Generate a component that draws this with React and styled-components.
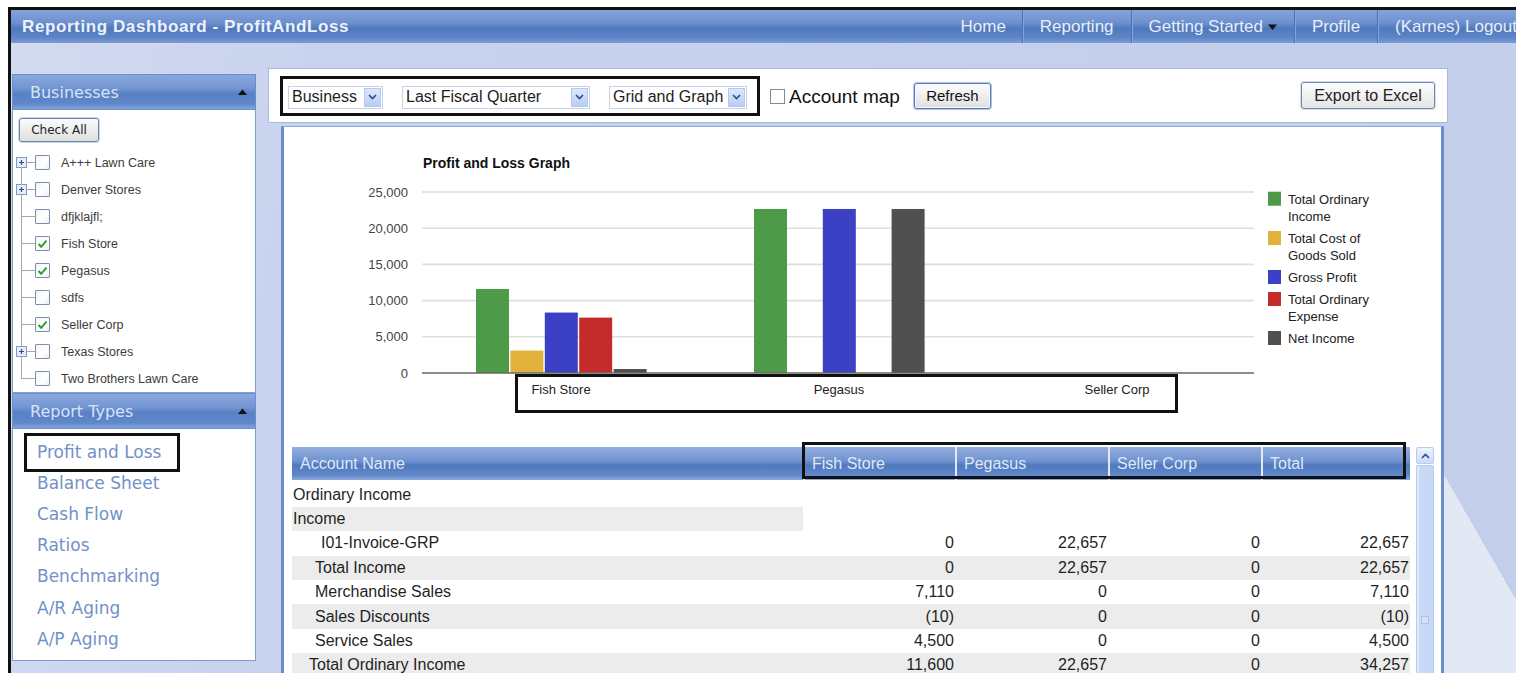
import React from 'react';
import styled, { createGlobalStyle, css } from 'styled-components';

const GlobalStyle = createGlobalStyle`
  html, body { margin: 0; padding: 0; background: #fff; }
  body { font-family: "Liberation Sans", Arial, sans-serif; overflow: hidden; }
  * { box-sizing: border-box; }
`;

const SANS = '"Liberation Sans", Arial, sans-serif';
const VERDANA = '"DejaVu Sans", Verdana, sans-serif';

/* ---------- shell ---------- */

const Viewport = styled.div`
  width: 1516px;
  height: 673px;
  padding: 7px 0 0 8px;
  overflow: hidden;
  background: #fff;
`;

const Frame = styled.div`
  width: 1508px;
  height: 666px;
  border-top: 3px solid #111;
  border-left: 3px solid #111;
  overflow: hidden;
  display: flex;
  flex-direction: column;
  background:
    linear-gradient(to top right, #e3e8f5 50%, transparent 50%) 1433px 465px / 72px 125px no-repeat,
    linear-gradient(#e3e8f5, #e3e8f5) 1433px 589px / 72px 100px no-repeat,
    linear-gradient(100deg, #d3dbf0 0%, #c8d2ed 22%, #c3ceeb 100%);
`;

const TopBar = styled.header`
  height: 33px;
  flex: none;
  display: flex;
  align-items: stretch;
  padding-left: 11px;
  background: linear-gradient(180deg, #84a3d9 0%, #6e91cf 38%, #5079bd 56%, #5b83c6 82%, #7b9cd6 100%);
`;

const AppTitle = styled.h1`
  margin: 0;
  align-self: center;
  font: bold 17px ${SANS};
  letter-spacing: 0.6px;
  color: #edf2fa;
`;

const Nav = styled.nav`
  margin-left: auto;
  margin-right: -18px;
  display: flex;
`;

const NavItem = styled.a`
  display: flex;
  align-items: center;
  gap: 5px;
  padding: 0 ${p => (p.$first ? 16 : 17)}px;
  font: 17px ${SANS};
  color: #e8eef9;
  text-decoration: none;
  white-space: nowrap;
  ${p => !p.$first && css`
    border-left: 1px solid #4a70b3;
    box-shadow: inset 1px 0 #86a5db;
  `}
`;

const Body = styled.div`
  flex: 1;
  min-height: 0;
  display: flex;
  padding: 25px 0 0 1px;
`;

/* ---------- sidebar ---------- */

const Sidebar = styled.aside`
  width: 244px;
  margin-top: 6px;
  display: flex;
  flex-direction: column;
  flex: none;
`;

const PanelHeader = styled.div`
  height: 36px;
  display: flex;
  align-items: center;
  justify-content: space-between;
  padding: 0 8px 0 17px;
  border: 1px solid #6a8fcf;
  background: linear-gradient(180deg, #8aa8dc 0%, #7194d1 40%, #5880c4 55%, #5f87c9 85%, #84a3d9 100%);
  font: 16px ${VERDANA};
  color: #d8e3f6;
`;

const PanelBody = styled.div`
  background: #fff;
  border: 1px solid #7e9fd6;
  border-top: none;
`;

const CheckAllButton = styled.button`
  display: block;
  margin: 8px 0 0 6px;
  width: 80px;
  height: 24px;
  padding: 0;
  border: 1px solid #72849f;
  border-radius: 3px;
  background: linear-gradient(#fbfbfb, #dfdfdf);
  box-shadow: 0 0 0 1px #c8d6ee;
  font: 12px ${VERDANA};
  color: #222;
`;

const Tree = styled.ul`
  list-style: none;
  margin: 7px 0 0;
  padding: 0;
`;

const TreeRow = styled.li`
  height: 27px;
  display: flex;
  align-items: center;
`;

const Connector = styled.span`
  width: 22px;
  height: 100%;
  flex: none;
  display: flex;
  align-items: center;
  background-repeat: no-repeat;
  background-image:
    linear-gradient(#a8a8a8, #a8a8a8),
    linear-gradient(#a8a8a8, #a8a8a8);
  background-size: 1px ${p => (p.$first || p.$last ? '14px' : '27px')}, 14px 1px;
  background-position: 8px ${p => (p.$first ? '13px' : '0')}, 8px 13px;
`;

const ExpandIcon = styled.svg`
  margin-left: 3px;
  display: block;
`;

const Box = styled.span`
  width: 15px;
  height: 15px;
  flex: none;
  display: flex;
  align-items: center;
  justify-content: center;
  border: 1px solid #7d8ea9;
  border-radius: 1px;
  background: linear-gradient(135deg, #f4f5f7, #ffffff 60%, #e9ecf1);
`;

const TreeLabel = styled.span`
  margin-left: 11px;
  font: 12.5px ${SANS};
  color: #3c3c3c;
  white-space: nowrap;
`;

const ReportList = styled.ul`
  list-style: none;
  margin: 0;
  padding: 7.5px 0 5.8px;
`;

const ReportItem = styled.li`
  height: 31.1px;
  display: flex;
  align-items: center;
`;

const ReportLink = styled.a`
  padding-left: 24px;
  font: 17px ${VERDANA};
  color: #7291c7;
  text-decoration: none;
  white-space: nowrap;
  ${p => p.$boxed && css`
    height: 39px;
    display: flex;
    align-items: center;
    flex: none;
    margin-left: 11px;
    padding: 0 16px 0 10px;
    border: 3px solid #111;
  `}
`;

/* ---------- main ---------- */

const Main = styled.main`
  width: 1180px;
  margin-left: 12px;
  display: flex;
  flex-direction: column;
`;

const Toolbar = styled.div`
  height: 55px;
  flex: none;
  display: flex;
  align-items: center;
  padding: 0 12px 0 11px;
  border: 1px solid #a3b9e2;
  background: #fff;
`;

const FilterGroup = styled.div`
  height: 40px;
  display: flex;
  align-items: center;
  gap: 19px;
  padding: 3px 10px 0 5px;
  border: 3px solid #111;
`;

const Select = styled.div`
  width: ${p => p.$w}px;
  height: 23px;
  display: flex;
  align-items: center;
  justify-content: space-between;
  padding: 0 1px 0 3px;
  border: 1px solid #c6d2ea;
  background: #fff;
  font: 16px ${SANS};
  color: #1d1d1d;
  white-space: nowrap;
`;

const SelectArrow = styled.span`
  width: 17px;
  height: 19px;
  display: flex;
  align-items: center;
  justify-content: center;
  border: 1px solid #b5c7ec;
  background: linear-gradient(#dde7fb, #b9cdf3);
`;

const MapToggle = styled.label`
  display: flex;
  align-items: center;
  gap: 4px;
  margin: 2px 0 0 10px;
  font: 19px ${SANS};
  color: #111;
`;

const PlainBox = styled.span`
  width: 15px;
  height: 15px;
  border: 1px solid #8a8a8a;
  background: #fff;
`;

const RefreshButton = styled.button`
  margin-left: 14px;
  width: 77px;
  height: 26px;
  padding: 0;
  border: 1px solid #5a7cb6;
  border-radius: 3px;
  background: linear-gradient(#fcfcfc, #e0e0e0);
  box-shadow: 0 0 0 1px #a9c3ee, inset 0 0 0 1px #f8f8f8;
  font: 15px ${SANS};
  color: #111;
`;

const ExportButton = styled.button`
  margin-left: auto;
  width: 134px;
  height: 27px;
  padding: 0;
  border: 1px solid #6f86ad;
  border-radius: 3px;
  background: linear-gradient(#fdfdfd, #e4e4e4);
  box-shadow: 0 0 0 1px #d3deef;
  font: 16px ${SANS};
  color: #222;
`;

const Content = styled.section`
  flex: 1;
  width: 1163px;
  margin: 3px 0 0 13px;
  border-left: 3px solid #6a8dcc;
  border-right: 3px solid #6a8dcc;
  border-top: 1px solid #8eaadf;
  background: #fff;
`;

const ChartSvg = styled.svg`
  display: block;
`;

const TableArea = styled.div`
  margin-top: 15px;
  padding-left: 8px;
  display: flex;
  gap: 6px;
  align-items: stretch;
`;

const Grid = styled.div`
  width: 1118px;
`;

const COLS = '511px 152px 153px 153px 149px';

const HeadRow = styled.div`
  position: relative;
  height: 33px;
  display: grid;
  grid-template-columns: ${COLS};
  background: linear-gradient(180deg, #93aedf 0%, #7093d0 42%, #5079be 55%, #6087c9 85%, #8aa8dc 100%);
`;

const HeadCell = styled.div`
  display: flex;
  align-items: center;
  padding-left: ${p => (p.$sep ? 7 : 8)}px;
  font: 16px ${SANS};
  color: #dfe8f7;
  ${p => p.$sep && css`border-left: 2px solid #e1e9f7;`}
`;

const HeadMark = styled.div`
  position: absolute;
  left: 510px;
  top: -5px;
  width: 604px;
  height: 37px;
  border: 3px solid #111;
  pointer-events: none;
`;

const Rows = styled.div`
  margin-top: 2.5px;
`;

const Row = styled.div`
  height: 24.4px;
  display: grid;
  grid-template-columns: ${COLS};
  font: 16px ${SANS};
  color: #1f1f1f;
  background: ${p => (p.$shade ? '#ececec' : 'transparent')};
`;

const NameCell = styled.div`
  display: flex;
  align-items: center;
  padding-left: ${p => p.$indent + 1}px;
  white-space: nowrap;
  background: ${p => (p.$shade ? '#ececec' : 'transparent')};
`;

const NumCell = styled.div`
  display: flex;
  align-items: center;
  justify-content: flex-end;
  padding-right: 1px;
`;

const Scrollbar = styled.div`
  width: 18px;
  display: flex;
  flex-direction: column;
  gap: 1px;
`;

const ScrollButton = styled.div`
  height: 17px;
  display: flex;
  align-items: center;
  justify-content: center;
  border: 1px solid #b9cbee;
  border-radius: 2px;
  background: linear-gradient(#edf3fd, #cddcf8);
`;

const ScrollTrack = styled.div`
  flex: 1;
  display: flex;
  flex-direction: column;
  align-items: center;
  padding-top: 150px;
  border: 1px solid #b7cbf0;
  border-radius: 2px;
  background: #c8d9f8;
  box-shadow: inset 2px 0 #e0eafc;
`;

const Grip = styled.span`
  width: 8px;
  height: 8px;
  border: 1px solid #aec3ec;
  background: #d6e2fa;
`;

/* ---------- data ---------- */

const BUSINESSES = [
  { name: 'A+++ Lawn Care', expand: true },
  { name: 'Denver Stores', expand: true },
  { name: 'dfjklajfl;' },
  { name: 'Fish Store', checked: true },
  { name: 'Pegasus', checked: true },
  { name: 'sdfs' },
  { name: 'Seller Corp', checked: true },
  { name: 'Texas Stores', expand: true },
  { name: 'Two Brothers Lawn Care' },
];

const REPORTS = ['Profit and Loss', 'Balance Sheet', 'Cash Flow', 'Ratios', 'Benchmarking', 'A/R Aging', 'A/P Aging'];

const SERIES = [
  { lines: ['Total Ordinary', 'Income'], color: '#4d9a48' },
  { lines: ['Total Cost of', 'Goods Sold'], color: '#e3b23c' },
  { lines: ['Gross Profit'], color: '#3b40c4' },
  { lines: ['Total Ordinary', 'Expense'], color: '#c42b2b' },
  { lines: ['Net Income'], color: '#505050' },
];

const GROUPS = [
  { label: 'Fish Store', values: [11600, 3100, 8350, 7650, 550] },
  { label: 'Pegasus', values: [22657, 0, 22657, 0, 22657] },
  { label: 'Seller Corp', values: [0, 0, 0, 0, 0] },
];

const COLUMNS = ['Fish Store', 'Pegasus', 'Seller Corp', 'Total'];

const LINES = [
  { name: 'Ordinary Income', indent: 0 },
  { name: 'Income', indent: 0, nameShade: true },
  { name: 'I01-Invoice-GRP', indent: 28, values: ['0', '22,657', '0', '22,657'] },
  { name: 'Total Income', indent: 22, shade: true, values: ['0', '22,657', '0', '22,657'] },
  { name: 'Merchandise Sales', indent: 22, values: ['7,110', '0', '0', '7,110'] },
  { name: 'Sales Discounts', indent: 22, shade: true, values: ['(10)', '0', '0', '(10)'] },
  { name: 'Service Sales', indent: 22, values: ['4,500', '0', '0', '4,500'] },
  { name: 'Total Ordinary Income', indent: 16, shade: true, values: ['11,600', '22,657', '0', '34,257'] },
];

/* ---------- small drawings ---------- */

const UpTriangle = () => (
  <svg width="9" height="6" viewBox="0 0 9 6"><path d="M0 6 L4.5 0.5 L9 6 Z" fill="#111" /></svg>
);

const DownTriangle = () => (
  <svg width="9" height="6" viewBox="0 0 9 6"><path d="M0 0.5 L9 0.5 L4.5 6 Z" fill="#111" /></svg>
);

const Chevron = ({ up }) => (
  <svg width="9" height="6" viewBox="0 0 9 6">
    <path d={up ? 'M1 5 L4.5 1.5 L8 5' : 'M1 1 L4.5 4.5 L8 1'} fill="none" stroke="#2c4b8c" strokeWidth="1.6" />
  </svg>
);

const PlusBox = () => (
  <ExpandIcon width="11" height="11" viewBox="0 0 11 11">
    <rect x="0.5" y="0.5" width="10" height="10" fill="#e6edf9" stroke="#8299c4" />
    <path d="M3 5.5 H8 M5.5 3 V8" stroke="#2f4f93" strokeWidth="1.2" />
  </ExpandIcon>
);

const Tick = () => (
  <svg width="11" height="10" viewBox="0 0 11 10">
    <path d="M1.5 5 L4.2 7.8 L9.5 1.6" fill="none" stroke="#27a327" strokeWidth="2" />
  </svg>
);

/* ---------- chart ---------- */

const ZERO_Y = 246;
const PX_PER_UNIT = 181 / 25000;
const GROUP_X = 192;
const GROUP_STEP = 278;
const BAR_STEP = 34.4;
const BAR_W = 33;
const LEGEND_TOPS = [64.7, 104, 143, 165, 204];

function ProfitChart() {
  const ticks = [0, 5000, 10000, 15000, 20000, 25000];
  return (
    <ChartSvg width="1157" height="305" viewBox="0 0 1157 305" fontFamily={SANS}>
      <text x="139" y="41" fontSize="14" fontWeight="bold" fill="#111">Profit and Loss Graph</text>
      {ticks.map(t => {
        const y = ZERO_Y - t * PX_PER_UNIT;
        return (
          <g key={t}>
            {t > 0 && <line x1="138" x2="970" y1={y} y2={y} stroke="#dedede" strokeWidth="1.6" />}
            <text x="124" y={y + 4.5} fontSize="13" fill="#444" textAnchor="end">
              {t.toLocaleString('en-US')}
            </text>
          </g>
        );
      })}
      {GROUPS.map((g, gi) => {
        const x0 = GROUP_X + gi * GROUP_STEP;
        return (
          <g key={g.label}>
            {g.values.map((v, i) => {
              const h = v * PX_PER_UNIT;
              return h > 0 ? (
                <rect key={i} x={x0 + i * BAR_STEP} y={ZERO_Y - h} width={BAR_W} height={h} fill={SERIES[i].color} />
              ) : null;
            })}
            <text x={x0 + 85} y="266.5" fontSize="13" fill="#222" textAnchor="middle">{g.label}</text>
          </g>
        );
      })}
      <line x1="138" x2="970" y1={ZERO_Y} y2={ZERO_Y} stroke="#666" strokeWidth="1.4" />
      <rect x="232.5" y="248.5" width="660" height="36" fill="none" stroke="#111" strokeWidth="3" />
      {SERIES.map((s, i) => {
        const top = LEGEND_TOPS[i];
        return (
          <g key={i}>
            <rect x="984" y={top} width="13" height="14" fill={s.color} />
            {s.lines.map((l, li) => (
              <text key={li} x="1004" y={top + 11.8 + li * 17.3} fontSize="13" fill="#222">{l}</text>
            ))}
          </g>
        );
      })}
    </ChartSvg>
  );
}

/* ---------- page ---------- */

export default function App() {
  return (
    <>
      <GlobalStyle />
      <Viewport>
        <Frame>
          <TopBar>
            <AppTitle>Reporting Dashboard - ProfitAndLoss</AppTitle>
            <Nav>
              <NavItem $first>Home</NavItem>
              <NavItem>Reporting</NavItem>
              <NavItem>Getting Started <DownTriangle /></NavItem>
              <NavItem>Profile</NavItem>
              <NavItem>(Karnes) Logout</NavItem>
            </Nav>
          </TopBar>

          <Body>
            <Sidebar>
              <PanelHeader>Businesses <UpTriangle /></PanelHeader>
              <PanelBody>
                <CheckAllButton>Check All</CheckAllButton>
                <Tree>
                  {BUSINESSES.map((b, i) => (
                    <TreeRow key={b.name}>
                      <Connector $first={i === 0} $last={i === BUSINESSES.length - 1}>
                        {b.expand && <PlusBox />}
                      </Connector>
                      <Box>{b.checked && <Tick />}</Box>
                      <TreeLabel>{b.name}</TreeLabel>
                    </TreeRow>
                  ))}
                </Tree>
              </PanelBody>

              <PanelHeader>Report Types <UpTriangle /></PanelHeader>
              <PanelBody>
                <ReportList>
                  {REPORTS.map((r, i) => (
                    <ReportItem key={r}>
                      <ReportLink $boxed={i === 0}>{r}</ReportLink>
                    </ReportItem>
                  ))}
                </ReportList>
              </PanelBody>
            </Sidebar>

            <Main>
              <Toolbar>
                <FilterGroup>
                  <Select $w={95}>Business<SelectArrow><Chevron /></SelectArrow></Select>
                  <Select $w={188}>Last Fiscal Quarter<SelectArrow><Chevron /></SelectArrow></Select>
                  <Select $w={138}>Grid and Graph<SelectArrow><Chevron /></SelectArrow></Select>
                </FilterGroup>
                <MapToggle><PlainBox />Account map</MapToggle>
                <RefreshButton>Refresh</RefreshButton>
                <ExportButton>Export to Excel</ExportButton>
              </Toolbar>

              <Content>
                <ProfitChart />
                <TableArea>
                  <Grid>
                    <HeadRow>
                      <HeadCell>Account Name</HeadCell>
                      {COLUMNS.map(c => <HeadCell key={c} $sep>{c}</HeadCell>)}
                      <HeadMark />
                    </HeadRow>
                    <Rows>
                      {LINES.map(l => (
                        <Row key={l.name} $shade={l.shade}>
                          <NameCell $indent={l.indent} $shade={l.nameShade}>{l.name}</NameCell>
                          {(l.values || ['', '', '', '']).map((v, i) => <NumCell key={i}>{v}</NumCell>)}
                        </Row>
                      ))}
                    </Rows>
                  </Grid>
                  <Scrollbar>
                    <ScrollButton><Chevron up /></ScrollButton>
                    <ScrollTrack><Grip /></ScrollTrack>
                  </Scrollbar>
                </TableArea>
              </Content>
            </Main>
          </Body>
        </Frame>
      </Viewport>
    </>
  );
}
